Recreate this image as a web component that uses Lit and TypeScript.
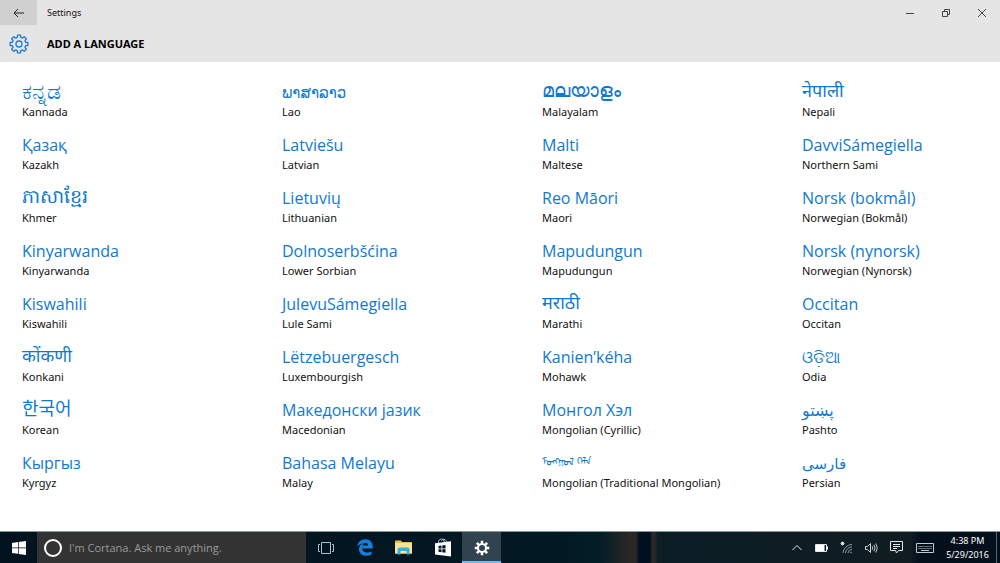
import { LitElement, html, css } from "lit";
import { customElement, property } from "lit/decorators.js";

interface Language {
  native: string;
  english: string;
  lang: string;
  size?: "xs" | "sm" | "lg" | "xl" | "xxl";
}

const LANGUAGES: Language[] = [
  { native: "ಕನ್ನಡ", english: "Kannada", lang: "kn", size: "xxl" },
  { native: "Қазақ", english: "Kazakh", lang: "kk" },
  { native: "ភាសាខ្មែរ", english: "Khmer", lang: "km", size: "xl" },
  { native: "Kinyarwanda", english: "Kinyarwanda", lang: "rw" },
  { native: "Kiswahili", english: "Kiswahili", lang: "sw" },
  { native: "कोंकणी", english: "Konkani", lang: "kok", size: "lg" },
  { native: "한국어", english: "Korean", lang: "ko", size: "lg" },
  { native: "Кыргыз", english: "Kyrgyz", lang: "ky" },
  { native: "ພາສາລາວ", english: "Lao", lang: "lo", size: "sm" },
  { native: "Latviešu", english: "Latvian", lang: "lv" },
  { native: "Lietuvių", english: "Lithuanian", lang: "lt" },
  { native: "Dolnoserbšćina", english: "Lower Sorbian", lang: "dsb" },
  { native: "JulevuSámegiella", english: "Lule Sami", lang: "smj" },
  { native: "Lëtzebuergesch", english: "Luxembourgish", lang: "lb" },
  { native: "Македонски јазик", english: "Macedonian", lang: "mk" },
  { native: "Bahasa Melayu", english: "Malay", lang: "ms" },
  { native: "മലയാളം", english: "Malayalam", lang: "ml", size: "xl" },
  { native: "Malti", english: "Maltese", lang: "mt" },
  { native: "Reo Māori", english: "Maori", lang: "mi" },
  { native: "Mapudungun", english: "Mapudungun", lang: "arn" },
  { native: "मराठी", english: "Marathi", lang: "mr", size: "lg" },
  { native: "Kanien’kéha", english: "Mohawk", lang: "moh" },
  { native: "Монгол Хэл", english: "Mongolian (Cyrillic)", lang: "mn" },
  { native: "ᠮᠣᠩᠭᠣᠯ ᠬᠡᠯᠡ", english: "Mongolian (Traditional Mongolian)", lang: "mn-Mong", size: "xs" },
  { native: "नेपाली", english: "Nepali", lang: "ne", size: "lg" },
  { native: "DavviSámegiella", english: "Northern Sami", lang: "se" },
  { native: "Norsk (bokmål)", english: "Norwegian (Bokmål)", lang: "nb" },
  { native: "Norsk (nynorsk)", english: "Norwegian (Nynorsk)", lang: "nn" },
  { native: "Occitan", english: "Occitan", lang: "oc" },
  { native: "ଓଡ଼ିଆ", english: "Odia", lang: "or" },
  { native: "پښتو", english: "Pashto", lang: "ps" },
  { native: "فارسی", english: "Persian", lang: "fa", size: "sm" },
];

/* Outline of a cog with eight square teeth, centred on the origin. */
function cogPath(outer: number, inner: number): string {
  const points: string[] = [];
  for (let i = 0; i < 8; i++) {
    const mid = (i * Math.PI) / 4;
    for (const [r, a] of [
      [inner, -0.25],
      [outer, -0.17],
      [outer, 0.17],
      [inner, 0.25],
    ]) {
      points.push(`${(r * Math.sin(mid + a)).toFixed(2)} ${(-r * Math.cos(mid + a)).toFixed(2)}`);
    }
  }
  return `M${points.join("L")}Z`;
}

const icons = {
  back: html`<svg width="12" height="10" viewBox="0 0 12 10" fill="none" stroke="#222">
    <path d="M1 5H11M5 1L1 5L5 9" />
  </svg>`,
  minimize: html`<svg width="10" height="10" viewBox="0 0 10 10" stroke="#444"><path d="M1 5.5H9" /></svg>`,
  restore: html`<svg width="10" height="10" viewBox="0 0 10 10" fill="none" stroke="#444">
    <path d="M1.5 3.5H6.5V8.5H1.5ZM3.5 3.5V1.5H8.5V6.5H6.5" />
  </svg>`,
  close: html`<svg width="10" height="10" viewBox="0 0 10 10" stroke="#444"><path d="M1 1L9 9M9 1L1 9" /></svg>`,
  cogOutline: html`<svg width="20" height="20" viewBox="-10 -10 20 20" fill="none" stroke="#1a7bd0" stroke-linejoin="round">
    <path stroke-width="1.3" d=${cogPath(9, 6.9)} /><circle stroke-width="1.3" r="3" />
  </svg>`,
  windows: html`<svg width="14" height="14" viewBox="0 0 14 14" fill="#fff">
    <path d="M0 2L6 1.1V6.6H0ZM6.7 1L14 0V6.6H6.7ZM0 7.3H6V12.8L0 12ZM6.7 7.3H14V14L6.7 12.9Z" />
  </svg>`,
  taskView: html`<svg width="16" height="12" viewBox="0 0 16 12" fill="none" stroke="#b4bdc2">
    <path d="M3.5 0.5H12.5V11.5H3.5ZM2 2.5H0.5V9.5H2M14 2.5H15.5V9.5H14" />
  </svg>`,
  edge: html`<svg width="16" height="17" viewBox="0 0 16 17" fill="#1380de">
    <path d="M0.3 7.6C0.8 3.2 4 0.3 8.3 0.3C13 0.3 15.7 3.5 15.7 7.6V9.6H5.2C5.3 12.3 7.5 13.5 10 13.5C11.9 13.5 13.3 13 14.5 12.2V15.5C13 16.3 11.3 16.7 9.3 16.7C4.8 16.7 2 14 2 10.2C2 7.6 3.5 5.6 5.6 4.6C3.4 4.9 1.6 6 0.3 7.6ZM5.4 6.6H11C11 4.8 10.2 3.8 8.5 3.8C6.8 3.8 5.7 4.9 5.4 6.6Z" />
  </svg>`,
  explorer: html`<svg width="17" height="15" viewBox="0 0 17 15">
    <path fill="#e9bd4f" d="M0 1.2Q0 0.5 0.7 0.5H6L7 2H16.2Q17 2 17 2.8V13.5H0Z" />
    <path fill="#fbe294" d="M0 3H17V13.5H0Z" />
    <path fill="#35b1e1" d="M2.5 14.5V9.5Q2.5 7.5 4.5 7.5H12.5Q14.5 7.5 14.5 9.5V14.5H11.5V11H5.5V14.5Z" />
  </svg>`,
  store: html`<svg width="18" height="19" viewBox="0 0 18 19">
    <path fill="none" stroke="#c3cdd2" stroke-width="0.9" d="M4.5 5V3.5Q5 1 7.5 1Q10 1 10.5 4M7.5 2.5Q9 0.5 11 1.5Q12.5 2.5 12.5 4" />
    <path fill="#fff" d="M1 5.2L17 3.2V18.5L1 16.5Z" />
    <path fill="#06151f" d="M4.5 8L7.5 7.6V10.5H4.5ZM8.3 7.5L11.5 7V10.5H8.3ZM4.5 11.2H7.5V14.2L4.5 13.8ZM8.3 11.2H11.5V14.7L8.3 14.3Z" />
  </svg>`,
  cogSolid: html`<svg width="16" height="16" viewBox="-8 -8 16 16" fill="#fff">
    <path fill-rule="evenodd" d="${cogPath(7.4, 5)}M3 0A3 3 0 1 0 -3 0A3 3 0 1 0 3 0Z" />
  </svg>`,
  chevron: html`<svg width="10" height="7" viewBox="0 0 10 7" fill="none" stroke="#e4e8ea"><path d="M0.5 6L5 1.5L9.5 6" /></svg>`,
  battery: html`<svg width="13" height="8" viewBox="0 0 13 8">
    <path fill="none" stroke="#e4e8ea" d="M0.5 0.5H11.5V7.5H0.5Z" /><path fill="#fff" d="M1 1H9.5V7H1ZM12 2.5H13V5.5H12Z" />
  </svg>`,
  wifi: html`<svg width="13" height="13" viewBox="0 0 13 13" fill="none" stroke="#8f999e">
    <path d="M3 12A9 9 0 0 1 12 3.5M5.5 12A6.5 6.5 0 0 1 12 6M8 12A4 4 0 0 1 12 8.5" />
    <circle cx="11" cy="11.5" r="0.8" fill="#8f999e" stroke="none" />
    <path stroke="#fff" stroke-width="0.8" d="M2.5 0.5V4.5M0.5 2.5H4.5M1 1L4 4M4 1L1 4" />
  </svg>`,
  volume: html`<svg width="13" height="12" viewBox="0 0 13 12" fill="none" stroke="#d0d6d9">
    <path d="M0.5 4.5H2.5L5.5 1.5V10.5L2.5 7.5H0.5Z" />
    <path d="M7.3 4.2Q8.3 6 7.3 7.8M9 2.8Q11 6 9 9.2M10.8 1.5Q13.8 6 10.8 10.5" stroke-width="0.9" />
  </svg>`,
  action: html`<svg width="13" height="13" viewBox="0 0 13 13" fill="none" stroke="#e4e8ea">
    <path d="M0.5 0.5H12.5V9.5H8.5L6.5 12L5.5 9.5H0.5ZM3 3.5H10M3 5.5H10M3 7.5H7" />
  </svg>`,
  keyboard: html`<svg width="18" height="10" viewBox="0 0 18 10" fill="none" stroke="#c3cacd">
    <path d="M0.5 0.5H17.5V9.5H0.5Z" />
    <path stroke-dasharray="1 1" d="M2.5 3.5H16M2.5 5.5H16" /><path d="M5 7.5H13" />
  </svg>`,
};

@customElement("title-header")
class TitleHeader extends LitElement {
  static styles = css`
    :host {
      display: block;
      background: #e5e5e5;
      color: #111;
    }
    .bar {
      display: flex;
      height: 25px;
      align-items: stretch;
    }
    button {
      display: flex;
      align-items: center;
      justify-content: center;
      width: 36px;
      padding: 0;
      border: 0;
      background: none;
    }
    .back {
      width: 37px;
      background: #d0d0d0;
    }
    .app {
      flex: 1;
      padding-left: 10px;
      font-family: "Noto Sans", "Open Sans", sans-serif;
      font-size: 9px;
      line-height: 26px;
    }
    .heading {
      display: flex;
      height: 37px;
      align-items: center;
    }
    .cog {
      display: flex;
      width: 37px;
      justify-content: center;
    }
    h1 {
      margin: 0;
      padding-left: 10px;
      font-family: "Noto Sans", "Open Sans", sans-serif;
      font-size: 11px;
      font-weight: 700;
      line-height: 20px;
      color: #000;
    }
  `;
  render() {
    return html`
      <div class="bar">
        <button class="back" aria-label="Back">${icons.back}</button>
        <span class="app">Settings</span>
        <button aria-label="Minimize">${icons.minimize}</button>
        <button aria-label="Restore">${icons.restore}</button>
        <button aria-label="Close">${icons.close}</button>
      </div>
      <div class="heading">
        <span class="cog">${icons.cogOutline}</span>
        <h1>ADD A LANGUAGE</h1>
      </div>
    `;
  }
}

@customElement("language-item")
class LanguageItem extends LitElement {
  @property({ attribute: false }) language!: Language;
  static styles = css`
    button {
      display: block;
      width: 100%;
      padding: 0 0 0 22px;
      border: 0;
      background: none;
      font-family: inherit;
      text-align: left;
      white-space: nowrap;
    }
    .native,
    .english {
      display: block;
    }
    .native {
      height: 24px;
      font-size: 16px;
      line-height: 24px;
      color: #1079cf;
    }
    .xs {
      font-size: 10px;
      line-height: 20px;
    }
    .sm {
      font-size: 15px;
    }
    .lg {
      font-size: 18px;
      line-height: 20px;
    }
    .xl {
      font-size: 19px;
      line-height: 20px;
    }
    .xxl {
      font-size: 22px;
      line-height: 20px;
    }
    .english {
      font-family: "Noto Sans", "Open Sans", sans-serif;
      font-size: 11px;
      line-height: 16px;
      color: #111;
    }
  `;
  render() {
    const { native, english, lang, size } = this.language;
    return html`<button>
      <span class="native ${size ?? ""}" lang=${lang}>${native}</span>
      <span class="english">${english}</span>
    </button>`;
  }
}

@customElement("task-bar")
class TaskBar extends LitElement {
  static styles = css`
    :host {
      display: flex;
      height: 32px;
      box-sizing: border-box;
      border-top: 1px solid #8b989d;
      background: linear-gradient(90deg, #02131f 0%, #021823 55%, #031d27 60%, #2b2725 63%, #2b2725 63.6%, #011020 63.9%, #011020 65%, #2b2725 65.2%, #2b2725 65.5%, #0b1d25 65.8%, #101c22 91%, #03101c 92%, #03101c 100%);
      color: #fff;
    }
    button {
      display: flex;
      align-items: center;
      justify-content: center;
      padding: 0;
      border: 0;
      background: none;
      color: inherit;
      font-family: inherit;
    }
    .start {
      width: 37px;
    }
    .search {
      display: flex;
      flex: 0 1 269px;
      align-items: center;
      gap: 7px;
      padding-left: 7px;
      box-sizing: border-box;
      background: #333;
    }
    .ring {
      flex: none;
      width: 18px;
      height: 18px;
      box-sizing: border-box;
      border: 2px solid #fff;
      border-radius: 50%;
    }
    input {
      flex: 1;
      min-width: 0;
      padding: 0;
      border: 0;
      background: none;
      color: #fff;
      font-family: inherit;
      font-size: 11px;
    }
    input::placeholder {
      color: #9a9a9a;
      opacity: 1;
    }
    .app {
      width: 39px;
    }
    .active {
      background: #30434e;
      box-shadow: inset 0 -2px #76b9ed;
    }
    .tray {
      display: flex;
      margin-left: auto;
    }
    .tray .icon {
      width: 25px;
    }
    .tray .wide {
      width: 31px;
    }
    .clock {
      width: 55px;
      flex-direction: column;
      font-family: "Noto Sans", "Open Sans", sans-serif;
      font-size: 9px;
      line-height: 14px;
    }
    .peek {
      width: 4px;
      margin-left: 1px;
      border-left: 1px solid #5b666d;
    }
  `;
  render() {
    return html`
      <button class="start" aria-label="Start">${icons.windows}</button>
      <label class="search">
        <span class="ring"></span>
        <input type="text" aria-label="Cortana search" placeholder="I'm Cortana. Ask me anything." />
      </label>
      <button class="app" aria-label="Task View">${icons.taskView}</button>
      <button class="app" aria-label="Microsoft Edge">${icons.edge}</button>
      <button class="app" aria-label="File Explorer">${icons.explorer}</button>
      <button class="app" aria-label="Store">${icons.store}</button>
      <button class="app active" aria-label="Settings">${icons.cogSolid}</button>
      <div class="tray">
        <button class="icon" aria-label="Show hidden icons">${icons.chevron}</button>
        <button class="icon" aria-label="Battery">${icons.battery}</button>
        <button class="icon" aria-label="Network">${icons.wifi}</button>
        <button class="icon" aria-label="Volume">${icons.volume}</button>
        <button class="icon" aria-label="Action Center">${icons.action}</button>
        <button class="wide" aria-label="Touch keyboard">${icons.keyboard}</button>
        <button class="clock"><span>4:38 PM</span><span>5/29/2016</span></button>
        <button class="peek" aria-label="Show desktop"></button>
      </div>
    `;
  }
}

@customElement("app-root")
class AppRoot extends LitElement {
  static styles = css`
    :host {
      display: flex;
      flex-direction: column;
      min-height: 100vh;
      background: #fff;
      font-family: "Open Sans", "Noto Sans", "Noto Sans CJK KR", "DejaVu Sans", sans-serif;
    }
    main {
      flex: 1;
      display: grid;
      grid-template-columns: 26% 26% 26% 1fr;
      grid-template-rows: repeat(8, 1fr);
      grid-auto-flow: column;
      padding: 18px 0 27px;
    }
  `;
  render() {
    return html`
      <title-header></title-header>
      <main>${LANGUAGES.map((l) => html`<language-item .language=${l}></language-item>`)}</main>
      <task-bar></task-bar>
    `;
  }
}
